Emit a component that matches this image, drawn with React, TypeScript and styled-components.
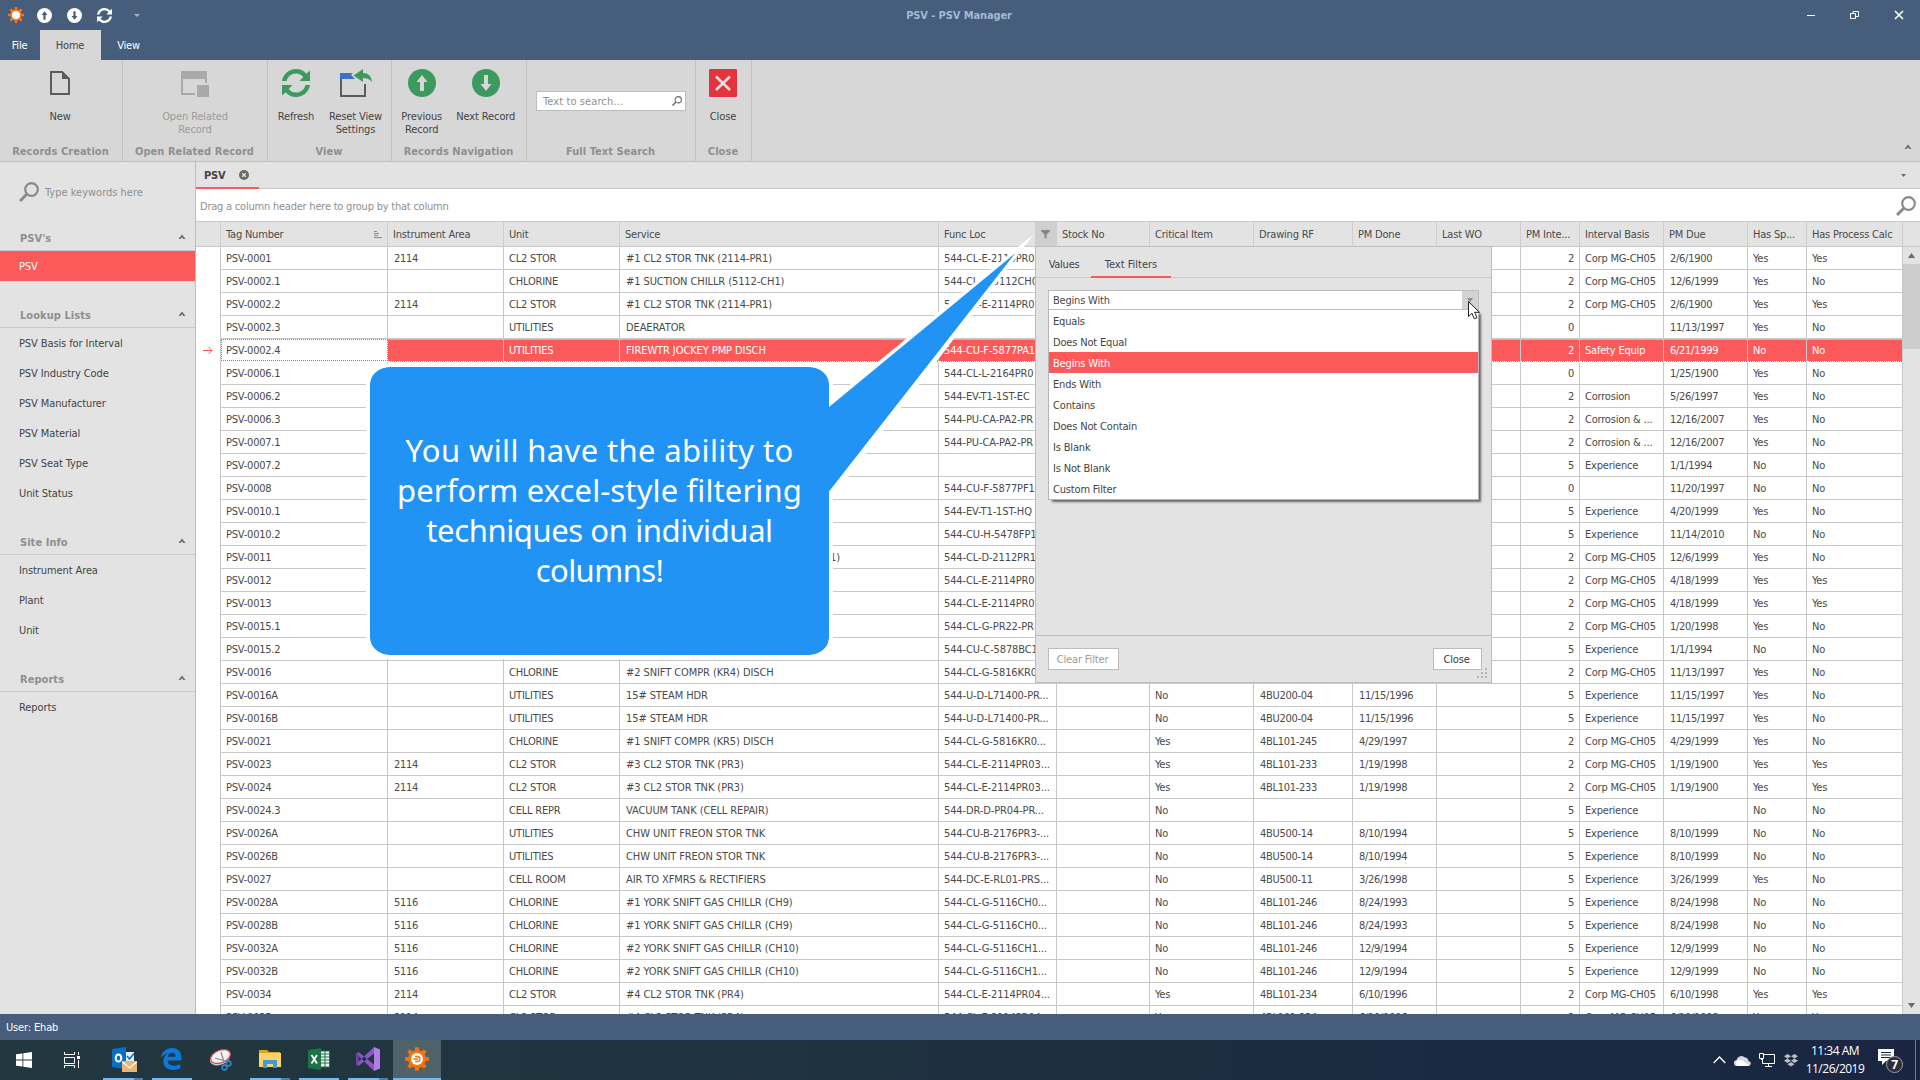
import React from 'react';
import styled, { createGlobalStyle, css } from 'styled-components';

const GlobalStyle = createGlobalStyle`
  * { box-sizing: border-box; }
  html, body { margin: 0; padding: 0; overflow: hidden; }
  body {
    font-family: "DejaVu Sans Condensed", "DejaVu Sans", Tahoma, sans-serif;
    font-stretch: condensed;
    font-size: 11px;
    letter-spacing: -0.25px;
    color: #4a4a4a;
  }
  svg { display: block; flex: none; }
`;

const colors = {
  blue: '#465d7b',
  ribbon: '#d7d7d7',
  panel: '#e3e3e3',
  line: '#c8c8c8',
  accent: '#fc5a5a',
  muted: '#8f8f8f',
  green: '#3c9a5f',
};

/* ---------- Shell ---------- */

const Screen = styled.div`
  position: relative;
  width: 1920px;
  height: 1080px;
  overflow: hidden;
  display: flex;
  flex-direction: column;
  background: ${colors.panel};
`;

const TitleBar = styled.header`
  display: grid;
  grid-template-columns: 1fr auto 1fr;
  align-items: center;
  height: 30px;
  background: ${colors.blue};
`;

const QuickAccess = styled.div`
  display: flex;
  align-items: center;
  gap: 15px;
  padding-left: 8px;
`;

const WindowTitle = styled.div`
  padding-right: 2px;
  font-weight: bold;
  letter-spacing: -0.1px;
  color: #a3b9d6;
`;

const WindowButtons = styled.div`
  display: flex;
  justify-content: flex-end;
  gap: 32px;
  padding-right: 15px;
`;

const MenuTabs = styled.nav`
  display: flex;
  height: 30px;
  background: ${colors.blue};
`;

const MenuTab = styled.div<{ $w: number; $active?: boolean }>`
  width: ${p => p.$w}px;
  height: 30px;
  line-height: 32px;
  padding-right: 1px;
  text-align: center;
  letter-spacing: -0.2px;
  color: ${p => (p.$active ? '#444' : '#fff')};
  background: ${p => (p.$active ? colors.ribbon : 'transparent')};
`;

/* ---------- Ribbon ---------- */

const Ribbon = styled.section`
  display: flex;
  height: 102px;
  background: ${colors.ribbon};
  border-bottom: 1px solid #bdbdbd;
`;

const RibbonGroup = styled.div<{ $w: number }>`
  width: ${p => p.$w}px;
  display: flex;
  flex-direction: column;
  border-right: 1px solid #c2c2c2;
`;

const RibbonItems = styled.div<{ $shift?: number }>`
  flex: 1;
  display: flex;
  justify-content: center;
  padding-right: ${p => p.$shift ?? 0}px;
`;

const RibbonButton = styled.div<{ $w: number; $disabled?: boolean }>`
  width: ${p => p.$w}px;
  display: flex;
  flex-direction: column;
  align-items: center;
  padding-top: 9px;
  gap: 13px;
  line-height: 13px;
  letter-spacing: -0.12px;
  text-align: center;
  white-space: pre;
  color: ${p => (p.$disabled ? '#9b9b9b' : '#444')};
`;

const GroupCaption = styled.div`
  height: 21px;
  line-height: 23px;
  padding-right: 1px;
  text-align: center;
  font-weight: bold;
  letter-spacing: 0.05px;
  color: ${colors.muted};
  white-space: nowrap;
`;

const SearchField = styled.div`
  display: flex;
  align-items: center;
  justify-content: space-between;
  width: 150px;
  height: 20px;
  margin-top: 31px;
  padding: 0 3px 0 6px;
  background: #fff;
  border: 1px solid #bdbdbd;
  color: ${colors.muted};
  letter-spacing: 0.1px;
`;

const RibbonCollapse = styled.div`
  flex: 1;
  display: flex;
  align-items: flex-end;
  justify-content: flex-end;
  padding: 0 8px 11px 0;
`;

/* ---------- Body ---------- */

const Body = styled.main`
  display: flex;
  height: 852px;
`;

const Sidebar = styled.aside`
  width: 196px;
  border-right: 1px solid #bdbdbd;
  background: ${colors.panel};
`;

const KeywordSearch = styled.div`
  display: flex;
  align-items: center;
  gap: 6px;
  height: 42px;
  padding: 18px 0 0 19px;
  letter-spacing: 0;
  color: ${colors.muted};
`;

const NavHeader = styled.div`
  display: flex;
  align-items: flex-end;
  justify-content: space-between;
  height: 47px;
  padding: 0 9px 4px 20px;
  border-bottom: 1px solid ${colors.line};
  font-weight: bold;
  letter-spacing: 0.05px;
  color: ${colors.muted};
  line-height: 15px;
`;

const NavItem = styled.div<{ $active?: boolean }>`
  height: 30px;
  line-height: 32px;
  padding-left: 19px;
  letter-spacing: -0.1px;
  color: ${p => (p.$active ? '#fff' : '#444')};
  background: ${p => (p.$active ? colors.accent : 'transparent')};
`;

const ChevronBox = styled.span`
  padding-bottom: 6px;
`;

const Content = styled.section`
  flex: 1;
  min-width: 0;
  display: flex;
  flex-direction: column;
  background: #fff;
`;

const DocTabs = styled.div`
  display: flex;
  justify-content: space-between;
  height: 27px;
  background: ${colors.panel};
  border-bottom: 1px solid ${colors.line};
`;

const DocTab = styled.div`
  display: flex;
  align-items: center;
  gap: 14px;
  width: 63px;
  height: 27px;
  padding: 1px 0 0 8px;
  border-bottom: 2px solid ${colors.accent};
  font-weight: bold;
  color: #444;
`;

const DocTabsMenu = styled.div`
  padding: 12px 14px 0 0;
`;

const GroupPanel = styled.div`
  display: flex;
  align-items: center;
  justify-content: space-between;
  height: 32px;
  padding: 2px 4px 0 4px;
  letter-spacing: -0.22px;
  color: ${colors.muted};
`;

const columnTemplate =
  '25px 167px 116px 116px 319px 118px 93px 104px 99px 84px 84px 59px 84px 84px 59px 96px';

const HeaderRow = styled.div`
  display: grid;
  grid-template-columns: ${columnTemplate} 17px;
  height: 26px;
  background: ${colors.panel};
  border-top: 1px solid ${colors.line};
  border-bottom: 1px solid ${colors.line};
`;

const HeaderCell = styled.div`
  display: flex;
  align-items: center;
  justify-content: space-between;
  padding: 1px 5px 0 5px;
  border-right: 1px solid #cfcfcf;
  letter-spacing: -0.2px;
  white-space: nowrap;
  overflow: hidden;
`;

const FilterButton = styled.div`
  display: flex;
  align-items: center;
  justify-content: center;
  width: 21px;
  height: 25px;
  margin: -1px -5px 0 0;
  background: #cfcfcf;
`;

const GridBody = styled.div`
  flex: 1;
  display: flex;
  min-height: 0;
`;

const Rows = styled.div`
  width: 1707px;
  overflow: hidden;
`;

const Row = styled.div<{ $selected?: boolean }>`
  display: grid;
  grid-template-columns: ${columnTemplate};
  height: 23px;
  color: ${p => (p.$selected ? '#fff' : 'inherit')};
`;

const Cell = styled.div<{
  $right?: boolean;
  $indent: number;
  $spacing: number;
  $tone?: 'red' | 'focus';
}>`
  height: 23px;
  line-height: 24px;
  padding: 0 5px 0 ${p => p.$indent}px;
  border-right: 1px solid ${colors.line};
  border-bottom: 1px solid ${colors.line};
  text-align: ${p => (p.$right ? 'right' : 'left')};
  letter-spacing: ${p => p.$spacing}px;
  white-space: nowrap;
  overflow: hidden;
  ${p =>
    p.$tone === 'red' &&
    css`
      background: ${colors.accent};
      border-bottom: 1px dotted #fff;
      box-shadow: inset 0 1px 0 #fda0a0;
    `}
  ${p =>
    p.$tone === 'focus' &&
    css`
      color: #4a4a4a;
      line-height: 22px;
      height: 22px;
      border: 1px dotted ${colors.accent};
      padding-left: 4px;
    `}
`;

const Gutter = styled.div`
  display: flex;
  align-items: center;
  padding-left: 7px;
  border-right: 1px solid ${colors.line};
`;

const ScrollBar = styled.div`
  flex: 1;
  display: flex;
  flex-direction: column;
  align-items: center;
  background: ${colors.panel};
`;

const ScrollArrow = styled.div`
  display: flex;
  align-items: center;
  height: 17px;
`;

const ScrollThumb = styled.div`
  width: 17px;
  height: 85px;
  margin-bottom: auto;
  background: #cdcdcd;
`;

/* ---------- Filter popup ---------- */

const Popup = styled.div`
  position: absolute;
  left: 1035px;
  top: 246px;
  width: 457px;
  height: 437px;
  display: flex;
  flex-direction: column;
  background: ${colors.panel};
  border: 1px solid #bdbdbd;
`;

const PopupTabs = styled.div`
  display: flex;
  height: 31px;
  border-bottom: 1px solid ${colors.line};
`;

const PopupTab = styled.div<{ $w: number; $active?: boolean }>`
  width: ${p => p.$w}px;
  height: 31px;
  line-height: 35px;
  padding-left: ${p => (p.$active ? 0 : 1)}px;
  text-align: center;
  letter-spacing: ${p => (p.$active ? 0 : -0.25)}px;
  color: #444;
  border-bottom: ${p => (p.$active ? `2px solid ${colors.accent}` : 'none')};
`;

const PopupBody = styled.div`
  flex: 1;
  padding: 12px 12px 0;
`;

const Combo = styled.div`
  display: flex;
  justify-content: space-between;
  width: 431px;
  height: 20px;
  line-height: 20px;
  padding-left: 4px;
  background: #fff;
  border: 1px solid #bdbdbd;
  letter-spacing: -0.2px;
`;

const ComboButton = styled.div`
  display: flex;
  align-items: center;
  justify-content: center;
  width: 16px;
  background: #d3d3d3;
`;

const OptionList = styled.div`
  width: 431px;
  border: 1px solid #b5b5b5;
  border-top: none;
  background: #fff;
  box-shadow: 3px 3px 2px -1px rgba(0, 0, 0, 0.55);
`;

const Option = styled.div<{ $active?: boolean }>`
  height: 21px;
  line-height: 24px;
  padding-left: 4px;
  letter-spacing: -0.17px;
  color: ${p => (p.$active ? '#fff' : '#444')};
  background: ${p => (p.$active ? colors.accent : '#fff')};
`;

const PopupFooter = styled.div`
  display: flex;
  justify-content: space-between;
  height: 47px;
  padding: 12px 9px 0 12px;
  border-top: 1px solid #bdbdbd;
`;

const Button = styled.div<{ $w: number; $disabled?: boolean }>`
  width: ${p => p.$w}px;
  height: 22px;
  line-height: 22px;
  padding-right: 2px;
  text-align: center;
  letter-spacing: -0.15px;
  background: #fff;
  border: 1px solid #bdbdbd;
  color: ${p => (p.$disabled ? '#9b9b9b' : '#3c3c3c')};
`;

const Grip = styled.svg`
  position: absolute;
  right: 4px;
  bottom: 4px;
`;

const Cursor = styled.svg`
  position: absolute;
  left: 1468px;
  top: 301px;
`;

/* ---------- Callout ---------- */

const CalloutBox = styled.div`
  position: absolute;
  left: 366px;
  top: 363px;
  width: 467px;
  height: 296px;
  border: 4px solid #fff;
  border-radius: 24px 24px 24px 24px / 21px;
  background: #2193f5;
  background-clip: padding-box;
  display: flex;
  flex-direction: column;
  align-items: center;
  justify-content: center;
  padding-bottom: 2px;
  white-space: nowrap;
  color: #fff;
  font-family: "Noto Sans", "Open Sans", sans-serif;
  font-stretch: normal;
  font-size: 31px;
  line-height: 40px;
`;

const CalloutLine = styled.div<{ $spacing: number }>`
  letter-spacing: ${p => p.$spacing}px;
`;

const CalloutPointer = styled.svg`
  position: absolute;
  left: 820px;
  top: 230px;
`;

/* ---------- Status bar and taskbar ---------- */

const StatusBar = styled.footer`
  height: 26px;
  line-height: 28px;
  padding-left: 6px;
  letter-spacing: -0.15px;
  color: #fff;
  background: ${colors.blue};
`;

const Taskbar = styled.div`
  display: flex;
  justify-content: space-between;
  height: 40px;
  background: linear-gradient(90deg, #22373f 0%, #20343f 35%, #1b2a41 75%, #1a2641 100%);
`;

const TaskItems = styled.div`
  display: flex;
`;

const TaskItem = styled.div<{ $w?: number; $active?: boolean }>`
  width: ${p => p.$w ?? 49}px;
  display: flex;
  flex-direction: column;
  align-items: center;
  background: ${p => (p.$active ? '#4f6169' : 'transparent')};
`;

const TaskIcon = styled.div<{ $nudge?: number }>`
  flex: 1;
  display: flex;
  align-items: center;
  padding-left: ${p => Math.max(p.$nudge ?? 0, 0)}px;
  padding-right: ${p => Math.max(-(p.$nudge ?? 0), 0)}px;
`;

const Underline = styled.div<{ $w: number; $stack?: boolean }>`
  width: ${p => p.$w}px;
  height: 2px;
  background: ${p =>
    p.$stack ? 'linear-gradient(90deg, #76b9ed 31px, #4f7fa5 31px)' : '#76b9ed'};
`;

const Tray = styled.div`
  display: flex;
  align-items: center;
  color: #fff;
`;

const TrayIcons = styled.div`
  display: flex;
  align-items: center;
  gap: 8px;
`;

const Clock = styled.div`
  width: 76px;
  margin-left: -1px;
  text-align: center;
  font-family: "Open Sans", sans-serif;
  font-stretch: normal;
  font-size: 12px;
  line-height: 18px;
  letter-spacing: -0.5px;
`;

const ShowDesktop = styled.div`
  width: 5px;
  height: 40px;
  margin-left: 12px;
  border-left: 1px solid #6f7a8b;
`;

const Notification = styled.div`
  position: relative;
  width: 25px;
  height: 25px;
  margin-left: 5px;
  padding-top: 1px;
`;

const Badge = styled.div`
  position: absolute;
  left: 8px;
  top: 8px;
  width: 17px;
  height: 17px;
  border: 1px solid #9aa0a8;
  border-radius: 50%;
  background: #2a2f38;
  font: bold 12px/15px "Open Sans", sans-serif;
  text-align: center;
`;

/* ---------- Icons ---------- */

const gearPoints = (c: number, outer: number, inner: number) => {
  const pts: string[] = [];
  for (let i = 0; i < 8; i++) {
    [[-0.3, inner], [-0.2, outer], [0.2, outer], [0.3, inner]].forEach(([o, r]) => {
      const a = ((i + o) * Math.PI) / 4;
      pts.push(`${(c + r * Math.sin(a)).toFixed(2)},${(c - r * Math.cos(a)).toFixed(2)}`);
    });
  }
  return pts.join(' ');
};

const GearSmall = () => (
  <svg width="16" height="16" viewBox="0 0 16 16">
    <polygon points={gearPoints(8, 8, 5.6)} fill="#f47a1c" />
    <circle cx="8" cy="8" r="4" fill="#fff" />
  </svg>
);

const ArrowCircle = ({ size, down, fill, ink }: { size: number; down?: boolean; fill: string; ink: string }) => (
  <svg width={size} height={size} viewBox="0 0 28 28">
    <circle cx="14" cy="14" r="14" fill={fill} />
    <path
      d="M14 6 L19.500 13 H16 V22 H12 V13 H8.500 Z"
      fill={ink}
      transform={down ? 'rotate(180 14 14)' : undefined}
    />
  </svg>
);

const RefreshIcon = ({ size, color }: { size: number; color: string }) => (
  <svg width={size} height={size} viewBox="0 0 28 28" fill={color}>
    <path d="M0 12 C1 5 7 0 14 0 C18.500 0 22 2 24.300 4.800 L28 1.500 V12 H17.500 L21.300 8 C19.500 5.700 17 4.400 14 4.400 C9.500 4.400 5.500 7.500 4.600 12 Z" />
    <path d="M28 16 C27 23 21 28 14 28 C9.500 28 6 26 3.700 23.200 L0 26.500 V16 H10.500 L6.700 20 C8.500 22.300 11 23.600 14 23.600 C18.500 23.600 22.500 20.500 23.400 16 Z" />
  </svg>
);

const NewIcon = () => (
  <svg width="28" height="28" viewBox="0 0 28 28">
    <path d="M5 3 H16 L23 10 V25 H5 Z" fill="none" stroke="#5c5c5c" strokeWidth="2" />
    <path d="M16 2 L24 10 H16 Z" fill="#5c5c5c" />
  </svg>
);

const RelatedIcon = () => (
  <svg width="28" height="28" viewBox="0 0 28 28">
    <path d="M0 2 H26 V10 H0 Z" fill="#a9a9a9" />
    <path d="M1 10 V25 H14 M25 10 V14" fill="none" stroke="#a9a9a9" strokeWidth="2" />
    <rect x="16" y="16" width="12" height="12" fill="#a9a9a9" />
  </svg>
);

const ResetIcon = () => (
  <svg width="32" height="28" viewBox="0 0 32 28">
    <path d="M1 9 V27 H25 V15" fill="none" stroke="#5c5c5c" strokeWidth="2" />
    <path d="M0 4 H13 L11 6 L15 10 H0 Z" fill="#3b73c4" />
    <path d="M13.500 6.500 L23 0 V4 C28 4 31.500 7 32 13 C29.500 10 27 9 23 9 V13 Z" fill={colors.green} />
  </svg>
);

const CloseIcon = () => (
  <svg width="28" height="28" viewBox="0 0 28 28">
    <rect width="28" height="28" rx="1" fill="#e33540" />
    <path d="M7 7.500 L21 21 M21 7.500 L7 21" stroke="#e6e0e0" strokeWidth="2.600" />
  </svg>
);

const Magnifier = ({ size, color, weight }: { size: number; color: string; weight: number }) => (
  <svg width={size} height={size} viewBox="0 0 20 20" fill="none" stroke={color} strokeWidth={weight}>
    <circle cx="12.500" cy="7.500" r="6.300" />
    <path d="M8 12 L1 19" strokeWidth={weight * 1.35} />
  </svg>
);

const ChevronUp = () => (
  <svg width="8" height="6" viewBox="0 0 8 6">
    <path d="M4 0.500 L7.500 5 H5.500 L4 3.300 L2.500 5 H0.500 Z" fill="#6a6a6a" />
  </svg>
);

const Triangle = ({ w, h, color, up }: { w: number; h: number; color: string; up?: boolean }) => (
  <svg width={w} height={h} viewBox="0 0 10 10" preserveAspectRatio="none">
    <path d={up ? 'M0 10 L5 0 L10 10 Z' : 'M0 0 L5 10 L10 0 Z'} fill={color} />
  </svg>
);

const TabClose = () => (
  <svg width="10" height="10" viewBox="0 0 10 10">
    <circle cx="5" cy="5" r="5" fill="#6a6a6a" />
    <path d="M3.200 3.200 L6.800 6.800 M6.800 3.200 L3.200 6.800" stroke="#e8e8e8" strokeWidth="1.300" />
  </svg>
);

const SortIcon = () => (
  <svg width="8" height="8" viewBox="0 0 8 8" stroke="#8a8a8a" strokeWidth="1">
    <path d="M0 0.500 H3 M0 2.500 H5 M0 4.500 H4 M0 6.500 H8" />
  </svg>
);

const Funnel = () => (
  <svg width="9" height="9" viewBox="0 0 9 9">
    <path d="M0 0 H9 V1 L5.500 4.500 V9 L3.500 7.500 V4.500 L0 1 Z" fill="#858585" />
  </svg>
);

const RowArrow = () => (
  <svg width="10" height="9" viewBox="0 0 10 9" fill="none" stroke={colors.accent}>
    <path d="M0 4.500 H9 M5.500 1 L9 4.500 L5.500 8" />
  </svg>
);

const OutlookIcon = () => (
  <svg width="25" height="25" viewBox="0 0 25 25">
    <path d="M0 2 L14 0 V22 L0 20 Z" fill="#0a6fc4" />
    <path d="M14 5 H22 V15 H14 Z" fill="#e9f2fb" />
    <path d="M15 9 L17.500 12 L22 6.500" fill="none" stroke="#0a6fc4" strokeWidth="1.500" />
    <ellipse cx="6.500" cy="11" rx="2.800" ry="3.600" fill="none" stroke="#fff" strokeWidth="2" />
    <rect x="10" y="14" width="15" height="11" fill="#e8b575" />
    <path d="M10.500 15 L17.500 21 L24.500 15" fill="none" stroke="#fff" strokeWidth="1.300" />
  </svg>
);

const EdgeIcon = () => (
  <svg width="21" height="22" viewBox="0 0 21 22">
    <path
      d="M0 10 C1 3.500 5.500 0 11 0 C17 0 20.500 4 20.500 10 V12.600 H6.600 C6.800 16 9.500 17.800 13 17.800 C15.500 17.800 17.500 17.200 19.300 16 V20.300 C17.300 21.400 14.800 22 12.200 22 C6 22 2.400 18.300 2.400 13 C2.400 9.500 4.200 7 7 5.600 C4 6 1.500 7.500 0 10 Z M6.800 8.800 H14.600 C14.600 6.200 13.200 4.800 11 4.800 C8.700 4.800 7.200 6.300 6.800 8.800 Z"
      fill="#0a7bdc"
      fillRule="evenodd"
    />
  </svg>
);

const SnipIcon = () => (
  <svg width="24" height="23" viewBox="0 0 24 23">
    <ellipse cx="11" cy="9" rx="10.500" ry="6.800" transform="rotate(-22 11 9)" fill="#c9cdd0" />
    <ellipse cx="11.500" cy="7.500" rx="10.300" ry="6.200" transform="rotate(-22 11.500 7.500)" fill="#f2f2f2" stroke="#d1484c" strokeWidth="1.200" />
    <path d="M6 9 L16 12 M12 3 L15 13" stroke="#858c92" strokeWidth="1.200" />
    <circle cx="19.500" cy="14.500" r="2.400" fill="none" stroke="#2a88cf" strokeWidth="1.600" />
    <circle cx="15.500" cy="18.500" r="2.400" fill="none" stroke="#2a88cf" strokeWidth="1.600" />
  </svg>
);

const ExplorerIcon = () => (
  <svg width="22" height="20" viewBox="0 0 22 20">
    <path d="M0 1 H8 L10 3 H21 V6 H0 Z" fill="#dda31f" />
    <rect y="4" width="22" height="14" fill="#fbd468" />
    <path d="M4 11 H18 V19 H14 V15 H8 V19 H4 Z" fill="#3f9be0" />
  </svg>
);

const ExcelIcon = () => (
  <svg width="22" height="22" viewBox="0 0 22 22">
    <rect x="12" y="3" width="9.500" height="16" fill="#f2f7f3" stroke="#1f7244" />
    <path d="M13 6 H21 M13 9 H21 M13 12 H21 M13 15 H21 M17 3 V19" stroke="#1f7244" />
    <path d="M0 2 L13 0 V22 L0 20 Z" fill="#1f7244" />
    <path d="M3.500 7 L9 15.500 M9 7 L3.500 15.500" stroke="#fff" strokeWidth="1.800" />
  </svg>
);

const StudioIcon = () => (
  <svg width="24" height="24" viewBox="0 0 24 24">
    <path d="M0 6.500 L2.500 5 L18 17.500 V24 Z M0 6.500 V17.500 L2.500 19 L18 6.500 V0 L2.300 15 V8 Z" fill="#8a57c9" />
    <path d="M18 0 L24 2.500 V21.500 L18 24 Z" fill="#b07fe6" />
    <path d="M0 6.500 L2.500 5 L2.500 19 L0 17.500 Z" fill="#6f41ab" />
  </svg>
);

const AppGear = () => (
  <svg width="24" height="24" viewBox="0 0 24 24">
    <polygon points={gearPoints(12, 12, 9)} fill="#f4730c" />
    <circle cx="12" cy="12" r="6" fill="#fff" />
    <path d="M10 9.500 H12.500 A2.500 2.500 0 0 1 12.500 14.500 H10 M8.500 12 H13" fill="none" stroke="#f4730c" strokeWidth="1.300" />
  </svg>
);

/* ---------- Data ---------- */

type RowData = [
  tag: string, area: string, unit: string, service: string, loc: string, stock: string,
  critical: string, drawing: string, done: string, wo: string, interval: string,
  basis: string, due: string, spec: string, calc: string,
];

const CORP = 'Corp MG-CH05';
const EXP = 'Experience';

const covered = (
  tag: string, area: string, unit: string, service: string, loc: string,
  interval: string, basis: string, due: string, spec: string, calc: string,
): RowData => [tag, area, unit, service, loc, '', '', '', '', '', interval, basis, due, spec, calc];

const rows: RowData[] = [
  covered('PSV-0001', '2114', 'CL2 STOR', '#1 CL2 STOR TNK (2114-PR1)', '544-CL-E-2114PR0', '2', CORP, '2/6/1900', 'Yes', 'Yes'),
  covered('PSV-0002.1', '', 'CHLORINE', '#1 SUCTION CHILLR (5112-CH1)', '544-CL-G-5112CH0', '2', CORP, '12/6/1999', 'Yes', 'No'),
  covered('PSV-0002.2', '2114', 'CL2 STOR', '#1 CL2 STOR TNK (2114-PR1)', '544-CL-E-2114PR0', '2', CORP, '2/6/1900', 'Yes', 'Yes'),
  covered('PSV-0002.3', '', 'UTILITIES', 'DEAERATOR', '', '0', '', '11/13/1997', 'Yes', 'No'),
  covered('PSV-0002.4', '', 'UTILITIES', 'FIREWTR JOCKEY PMP DISCH', '544-CU-F-5877PA1', '2', 'Safety Equip', '6/21/1999', 'No', 'No'),
  covered('PSV-0006.1', '', '', '', '544-CL-L-2164PR0', '0', '', '1/25/1900', 'Yes', 'No'),
  covered('PSV-0006.2', '', '', '', '544-EV-T1-1ST-EC', '2', 'Corrosion', '5/26/1997', 'Yes', 'No'),
  covered('PSV-0006.3', '', '', '', '544-PU-CA-PA2-PR', '2', 'Corrosion & ...', '12/16/2007', 'Yes', 'No'),
  covered('PSV-0007.1', '', '', '', '544-PU-CA-PA2-PR', '2', 'Corrosion & ...', '12/16/2007', 'Yes', 'No'),
  covered('PSV-0007.2', '', '', '', '', '5', EXP, '1/1/1994', 'No', 'No'),
  covered('PSV-0008', '', '', '', '544-CU-F-5877PF1', '0', '', '11/20/1997', 'No', 'No'),
  covered('PSV-0010.1', '', '', '', '544-EV-T1-1ST-HQ', '5', EXP, '4/20/1999', 'Yes', 'No'),
  covered('PSV-0010.2', '', '', '', '544-CU-H-5478FP1', '5', EXP, '11/14/2010', 'No', 'No'),
  covered('PSV-0011', '', '', '1)', '544-CL-D-2112PR1', '2', CORP, '12/6/1999', 'Yes', 'No'),
  covered('PSV-0012', '', '', '', '544-CL-E-2114PR0', '2', CORP, '4/18/1999', 'Yes', 'Yes'),
  covered('PSV-0013', '', '', '', '544-CL-E-2114PR0', '2', CORP, '4/18/1999', 'Yes', 'Yes'),
  covered('PSV-0015.1', '', '', '', '544-CL-G-PR22-PR', '2', CORP, '1/20/1998', 'Yes', 'No'),
  covered('PSV-0015.2', '', '', '', '544-CU-C-5878BC1', '5', EXP, '1/1/1994', 'No', 'No'),
  covered('PSV-0016', '', 'CHLORINE', '#2 SNIFT COMPR (KR4) DISCH', '544-CL-G-5816KR0', '2', CORP, '11/13/1997', 'Yes', 'No'),
  ['PSV-0016A', '', 'UTILITIES', '15# STEAM HDR', '544-U-D-L71400-PR...', '', 'No', '4BU200-04', '11/15/1996', '', '5', EXP, '11/15/1997', 'Yes', 'No'],
  ['PSV-0016B', '', 'UTILITIES', '15# STEAM HDR', '544-U-D-L71400-PR...', '', 'No', '4BU200-04', '11/15/1996', '', '5', EXP, '11/15/1997', 'Yes', 'No'],
  ['PSV-0021', '', 'CHLORINE', '#1 SNIFT COMPR (KR5) DISCH', '544-CL-G-5816KR0...', '', 'Yes', '4BL101-245', '4/29/1997', '', '2', CORP, '4/29/1999', 'Yes', 'No'],
  ['PSV-0023', '2114', 'CL2 STOR', '#3 CL2 STOR TNK (PR3)', '544-CL-E-2114PR03...', '', 'Yes', '4BL101-233', '1/19/1998', '', '2', CORP, '1/19/1900', 'Yes', 'Yes'],
  ['PSV-0024', '2114', 'CL2 STOR', '#3 CL2 STOR TNK (PR3)', '544-CL-E-2114PR03...', '', 'Yes', '4BL101-233', '1/19/1998', '', '2', CORP, '1/19/1900', 'Yes', 'Yes'],
  ['PSV-0024.3', '', 'CELL REPR', 'VACUUM TANK (CELL REPAIR)', '544-DR-D-PR04-PR...', '', 'No', '', '', '', '5', EXP, '', 'No', 'No'],
  ['PSV-0026A', '', 'UTILITIES', 'CHW UNIT FREON STOR TNK', '544-CU-B-2176PR3-...', '', 'No', '4BU500-14', '8/10/1994', '', '5', EXP, '8/10/1999', 'No', 'No'],
  ['PSV-0026B', '', 'UTILITIES', 'CHW UNIT FREON STOR TNK', '544-CU-B-2176PR3-...', '', 'No', '4BU500-14', '8/10/1994', '', '5', EXP, '8/10/1999', 'No', 'No'],
  ['PSV-0027', '', 'CELL ROOM', 'AIR TO XFMRS & RECTIFIERS', '544-DC-E-RL01-PRS...', '', 'No', '4BU500-11', '3/26/1998', '', '5', EXP, '3/26/1999', 'Yes', 'No'],
  ['PSV-0028A', '5116', 'CHLORINE', '#1 YORK SNIFT GAS CHILLR (CH9)', '544-CL-G-5116CH0...', '', 'No', '4BL101-246', '8/24/1993', '', '5', EXP, '8/24/1998', 'No', 'No'],
  ['PSV-0028B', '5116', 'CHLORINE', '#1 YORK SNIFT GAS CHILLR (CH9)', '544-CL-G-5116CH0...', '', 'No', '4BL101-246', '8/24/1993', '', '5', EXP, '8/24/1998', 'No', 'No'],
  ['PSV-0032A', '5116', 'CHLORINE', '#2 YORK SNIFT GAS CHILLR (CH10)', '544-CL-G-5116CH1...', '', 'No', '4BL101-246', '12/9/1994', '', '5', EXP, '12/9/1999', 'No', 'No'],
  ['PSV-0032B', '5116', 'CHLORINE', '#2 YORK SNIFT GAS CHILLR (CH10)', '544-CL-G-5116CH1...', '', 'No', '4BL101-246', '12/9/1994', '', '5', EXP, '12/9/1999', 'No', 'No'],
  ['PSV-0034', '2114', 'CL2 STOR', '#4 CL2 STOR TNK (PR4)', '544-CL-E-2114PR04...', '', 'Yes', '4BL101-234', '6/10/1996', '', '2', CORP, '6/10/1998', 'Yes', 'Yes'],
  ['PSV-0035', '2114', 'CL2 STOR', '#4 CL2 STOR TNK (PR4)', '544-CL-E-2114PR04...', '', 'Yes', '4BL101-234', '6/10/1996', '', '2', CORP, '6/10/1998', 'Yes', 'Yes'],
];

/* Left indent and tracking of each column's values, in header order. */
const columns = [
  { title: 'Tag Number', indent: 5, spacing: -0.22 },
  { title: 'Instrument Area', indent: 6, spacing: -0.3 },
  { title: 'Unit', indent: 5, spacing: -0.2 },
  { title: 'Service', indent: 6, spacing: -0.09 },
  { title: 'Func Loc', indent: 5, spacing: -0.12 },
  { title: 'Stock No', indent: 5, spacing: -0.25 },
  { title: 'Critical Item', indent: 5, spacing: -0.25 },
  { title: 'Drawing RF', indent: 6, spacing: -0.3 },
  { title: 'PM Done', indent: 6, spacing: -0.28 },
  { title: 'Last WO', indent: 5, spacing: -0.25 },
  { title: 'PM Inte...', indent: 5, spacing: -0.25 },
  { title: 'Interval Basis', indent: 5, spacing: -0.2 },
  { title: 'PM Due', indent: 6, spacing: -0.28 },
  { title: 'Has Sp...', indent: 5, spacing: -0.25 },
  { title: 'Has Process Calc', indent: 5, spacing: -0.25 },
];

const SELECTED = 4;
const INTERVAL_COL = 10;

const navGroups = [
  { title: "PSV's", items: ['PSV'] },
  {
    title: 'Lookup Lists',
    items: ['PSV Basis for Interval', 'PSV Industry Code', 'PSV Manufacturer', 'PSV Material', 'PSV Seat Type', 'Unit Status'],
  },
  { title: 'Site Info', items: ['Instrument Area', 'Plant', 'Unit'] },
  { title: 'Reports', items: ['Reports'] },
];

const filterOptions = [
  'Equals', 'Does Not Equal', 'Begins With', 'Ends With', 'Contains',
  'Does Not Contain', 'Is Blank', 'Is Not Blank', 'Custom Filter',
];

const calloutLines: [string, number][] = [
  ['You will have the ability to', 0.38],
  ['perform excel-style filtering', 0.12],
  ['techniques on individual', -0.4],
  ['columns!', -0.55],
];

const toneFor = (row: number, col: number) => {
  if (row !== SELECTED) return undefined;
  return col === 0 ? 'focus' : 'red';
};

/* ---------- Sections ---------- */

const AppRibbon = () => (
  <Ribbon>
    <RibbonGroup $w={123}>
      <RibbonItems $shift={2}>
        <RibbonButton $w={60}><NewIcon />New</RibbonButton>
      </RibbonItems>
      <GroupCaption>Records Creation</GroupCaption>
    </RibbonGroup>
    <RibbonGroup $w={145}>
      <RibbonItems>
        <RibbonButton $w={80} $disabled><RelatedIcon />{'Open Related\nRecord'}</RibbonButton>
      </RibbonItems>
      <GroupCaption>Open Related Record</GroupCaption>
    </RibbonGroup>
    <RibbonGroup $w={124}>
      <RibbonItems $shift={4}>
        <RibbonButton $w={56}><RefreshIcon size={28} color={colors.green} />Refresh</RibbonButton>
        <RibbonButton $w={63}><ResetIcon />{'Reset View\nSettings'}</RibbonButton>
      </RibbonItems>
      <GroupCaption>View</GroupCaption>
    </RibbonGroup>
    <RibbonGroup $w={135}>
      <RibbonItems $shift={6}>
        <RibbonButton $w={60}>
          <ArrowCircle size={28} fill={colors.green} ink={colors.ribbon} />{'Previous\nRecord'}
        </RibbonButton>
        <RibbonButton $w={69}>
          <ArrowCircle size={28} down fill={colors.green} ink={colors.ribbon} />Next Record
        </RibbonButton>
      </RibbonItems>
      <GroupCaption>Records Navigation</GroupCaption>
    </RibbonGroup>
    <RibbonGroup $w={169}>
      <RibbonItems>
        <SearchField>Text to search...<Magnifier size={10} color="#666" weight={2.2} /></SearchField>
      </RibbonItems>
      <GroupCaption>Full Text Search</GroupCaption>
    </RibbonGroup>
    <RibbonGroup $w={56}>
      <RibbonItems $shift={1}>
        <RibbonButton $w={50}><CloseIcon />Close</RibbonButton>
      </RibbonItems>
      <GroupCaption>Close</GroupCaption>
    </RibbonGroup>
    <RibbonCollapse><ChevronUp /></RibbonCollapse>
  </Ribbon>
);

const Navigation = () => (
  <Sidebar>
    <KeywordSearch><Magnifier size={20} color="#8a8a8a" weight={2.2} />Type keywords here</KeywordSearch>
    {navGroups.map(group => (
      <React.Fragment key={group.title}>
        <NavHeader>{group.title}<ChevronBox><ChevronUp /></ChevronBox></NavHeader>
        {group.items.map(item => <NavItem key={item} $active={item === 'PSV'}>{item}</NavItem>)}
      </React.Fragment>
    ))}
  </Sidebar>
);

const DataGrid = () => (
  <>
    <HeaderRow>
      <HeaderCell />
      {columns.map(({ title }) => (
        <HeaderCell key={title}>
          <span>{title}</span>
          {title === 'Tag Number' && <SortIcon />}
          {title === 'Func Loc' && <FilterButton><Funnel /></FilterButton>}
        </HeaderCell>
      ))}
    </HeaderRow>
    <GridBody>
      <Rows>
        {rows.map((row, r) => (
          <Row key={row[0]} $selected={r === SELECTED}>
            <Gutter>{r === SELECTED && <RowArrow />}</Gutter>
            {row.map((value, c) => (
              <Cell
                key={c}
                $right={c === INTERVAL_COL}
                $indent={value === '1)' ? 210 : columns[c].indent}
                $spacing={columns[c].spacing}
                $tone={toneFor(r, c)}
              >
                {value}
              </Cell>
            ))}
          </Row>
        ))}
      </Rows>
      <ScrollBar>
        <ScrollArrow><Triangle w={7} h={5} color="#6a6a6a" up /></ScrollArrow>
        <ScrollThumb />
        <ScrollArrow><Triangle w={7} h={5} color="#6a6a6a" /></ScrollArrow>
      </ScrollBar>
    </GridBody>
  </>
);

const FilterPopup = () => (
  <Popup>
    <PopupTabs>
      <PopupTab $w={55}>Values</PopupTab>
      <PopupTab $w={80} $active>Text Filters</PopupTab>
    </PopupTabs>
    <PopupBody>
      <Combo>
        Begins With
        <ComboButton><Triangle w={6} h={4} color="#8a8a8a" /></ComboButton>
      </Combo>
      <OptionList>
        {filterOptions.map(o => <Option key={o} $active={o === 'Begins With'}>{o}</Option>)}
      </OptionList>
    </PopupBody>
    <PopupFooter>
      <Button $w={71} $disabled>Clear Filter</Button>
      <Button $w={49}>Close</Button>
    </PopupFooter>
    <Grip width="10" height="10" viewBox="0 0 10 10" fill="#b5b5b5">
      <path d="M8 0h2v2h-2z M4 4h2v2h-2z M8 4h2v2h-2z M0 8h2v2h-2z M4 8h2v2h-2z M8 8h2v2h-2z" />
    </Grip>
  </Popup>
);

const Callout = () => (
  <>
    <CalloutBox>
      {calloutLines.map(([text, spacing]) => (
        <CalloutLine key={text} $spacing={spacing}>{text}</CalloutLine>
      ))}
    </CalloutBox>
    <CalloutPointer width="216" height="280" viewBox="820 230 216 280">
      <polygon points="829,402 1034,234 829,502" fill="#fff" />
      <polygon points="820,414.500 1015.500,253 820,503" fill="#2193f5" />
    </CalloutPointer>
  </>
);

const NotificationIcon = () => (
  <Notification>
    <svg width="17" height="17" viewBox="0 0 17 17">
      <path d="M0 0 H16 V12 H8 L4 16 V12 H0 Z" fill="#fff" />
      <path d="M3 3.500 H13 M3 6 H13 M3 8.500 H13" stroke="#1a2641" />
    </svg>
    <Badge>7</Badge>
  </Notification>
);

const WindowsTaskbar = () => (
  <Taskbar>
    <TaskItems>
      <TaskItem $w={48}>
        <TaskIcon>
          <svg width="16" height="16" viewBox="0 0 16 16" fill="#fff">
            <path d="M0 2.300 L6.500 1.400 V7.600 H0 Z M7.300 1.300 L16 0 V7.600 H7.300 Z M0 8.400 H6.500 V14.600 L0 13.700 Z M7.300 8.400 H16 V16 L7.300 14.700 Z" />
          </svg>
        </TaskIcon>
      </TaskItem>
      <TaskItem $w={50}>
        <TaskIcon $nudge={-2}>
          <svg width="17" height="16" viewBox="0 0 17 16" fill="none" stroke="#fff">
            <path d="M0.500 0 V2.500 H10.500 V0 M0.500 5.500 H10.500 V11.500 H0.500 Z M0.500 16 V13.500 H10.500 V16 M14.500 0 V3 M14.500 8 V16" />
            <path d="M13 5.500 H16" strokeWidth="3" />
          </svg>
        </TaskIcon>
      </TaskItem>
      <TaskItem><TaskIcon $nudge={4}><OutlookIcon /></TaskIcon><Underline $w={40} $stack /></TaskItem>
      <TaskItem><TaskIcon><EdgeIcon /></TaskIcon><Underline $w={40} /></TaskItem>
      <TaskItem><TaskIcon><SnipIcon /></TaskIcon></TaskItem>
      <TaskItem><TaskIcon><ExplorerIcon /></TaskIcon><Underline $w={40} $stack /></TaskItem>
      <TaskItem><TaskIcon><ExcelIcon /></TaskIcon><Underline $w={40} /></TaskItem>
      <TaskItem $w={50}><TaskIcon><StudioIcon /></TaskIcon><Underline $w={40} $stack /></TaskItem>
      <TaskItem $w={48} $active><TaskIcon><AppGear /></TaskIcon><Underline $w={48} /></TaskItem>
    </TaskItems>
    <Tray>
      <TrayIcons>
        <svg width="13" height="8" viewBox="0 0 13 8" fill="none" stroke="#fff" strokeWidth="1.300">
          <path d="M0.700 7 L6.500 1 L12.300 7" />
        </svg>
        <svg width="17" height="11" viewBox="0 0 16 11">
          <path d="M3 11 A3 3 0 0 1 2 5 A5 5 0 0 1 10.500 2.500 A4 4 0 0 1 14 6 A2.500 2.500 0 0 1 13.500 11 Z" fill="#d7dade" />
          <path d="M3 11 A3 3 0 0 1 3.500 5.500 C6 4 9 6 14.500 10.500 L13.500 11 Z" fill="#fff" />
        </svg>
        <svg width="17" height="14" viewBox="0 0 17 14" fill="none" stroke="#fff">
          <path d="M5 1.500 H15.500 V10.500 H3.500 V6 M9.500 10.500 V13 M6 13.500 H13 M0.500 0.500 H4.500 V5.500 H0.500 Z M2.500 5.500 V7" />
        </svg>
        <svg width="14" height="13" viewBox="0 0 14 13" fill="#b9bec6">
          <path d="M3.500 0 L7 2.200 L3.500 4.400 L0 2.200 Z M10.500 0 L14 2.200 L10.500 4.400 L7 2.200 Z M3.500 4.600 L7 6.800 L3.500 9 L0 6.800 Z M10.500 4.600 L14 6.800 L10.500 9 L7 6.800 Z M7 8 L10.500 10.200 L7 12.400 L3.500 10.200 Z" />
        </svg>
      </TrayIcons>
      <Clock>11:34 AM<br />11/26/2019</Clock>
      <NotificationIcon />
      <ShowDesktop />
    </Tray>
  </Taskbar>
);

const QuickButtons = styled.div`
  display: flex;
  gap: 15px;
  margin-left: -2px;
`;

const CaretSlot = styled.span`
  padding-left: 7px;
`;

export default function App() {
  return (
    <Screen>
      <GlobalStyle />
      <TitleBar>
        <QuickAccess>
          <GearSmall />
          <QuickButtons>
            <ArrowCircle size={15} fill="#fff" ink={colors.blue} />
            <ArrowCircle size={15} down fill="#fff" ink={colors.blue} />
            <RefreshIcon size={15} color="#fff" />
          </QuickButtons>
          <CaretSlot><Triangle w={6} h={3} color="#a9b5c5" /></CaretSlot>
        </QuickAccess>
        <WindowTitle>PSV - PSV Manager</WindowTitle>
        <WindowButtons>
          <svg width="12" height="12" viewBox="0 0 12 12"><path d="M2 6.500 H10" stroke="#fff" /></svg>
          <svg width="12" height="12" viewBox="0 0 12 12" fill="none" stroke="#fff">
            <path d="M1.500 4.500 H6.500 V9.500 H1.500 Z M4 4.500 V2.500 H9.500 V7.500 H6.500" />
          </svg>
          <svg width="12" height="12" viewBox="0 0 12 12"><path d="M2 2 L10 10 M10 2 L2 10" stroke="#fff" strokeWidth="1.600" /></svg>
        </WindowButtons>
      </TitleBar>
      <MenuTabs>
        <MenuTab $w={40}>File</MenuTab>
        <MenuTab $w={61} $active>Home</MenuTab>
        <MenuTab $w={56}>View</MenuTab>
      </MenuTabs>
      <AppRibbon />
      <Body>
        <Navigation />
        <Content>
          <DocTabs>
            <DocTab>PSV<TabClose /></DocTab>
            <DocTabsMenu><Triangle w={5} h={3} color="#6a6a6a" /></DocTabsMenu>
          </DocTabs>
          <GroupPanel>
            Drag a column header here to group by that column
            <Magnifier size={20} color="#8a8a8a" weight={2.2} />
          </GroupPanel>
          <DataGrid />
        </Content>
      </Body>
      <StatusBar>User: Ehab</StatusBar>
      <WindowsTaskbar />
      <Callout />
      <FilterPopup />
      <Cursor width="13" height="19" viewBox="0 0 13 19">
        <path d="M0.500 0.500 V15.500 L4 12.300 L6.300 17.800 L9 16.700 L6.700 11.300 H11.500 Z" fill="#fff" stroke="#222" />
      </Cursor>
    </Screen>
  );
}
